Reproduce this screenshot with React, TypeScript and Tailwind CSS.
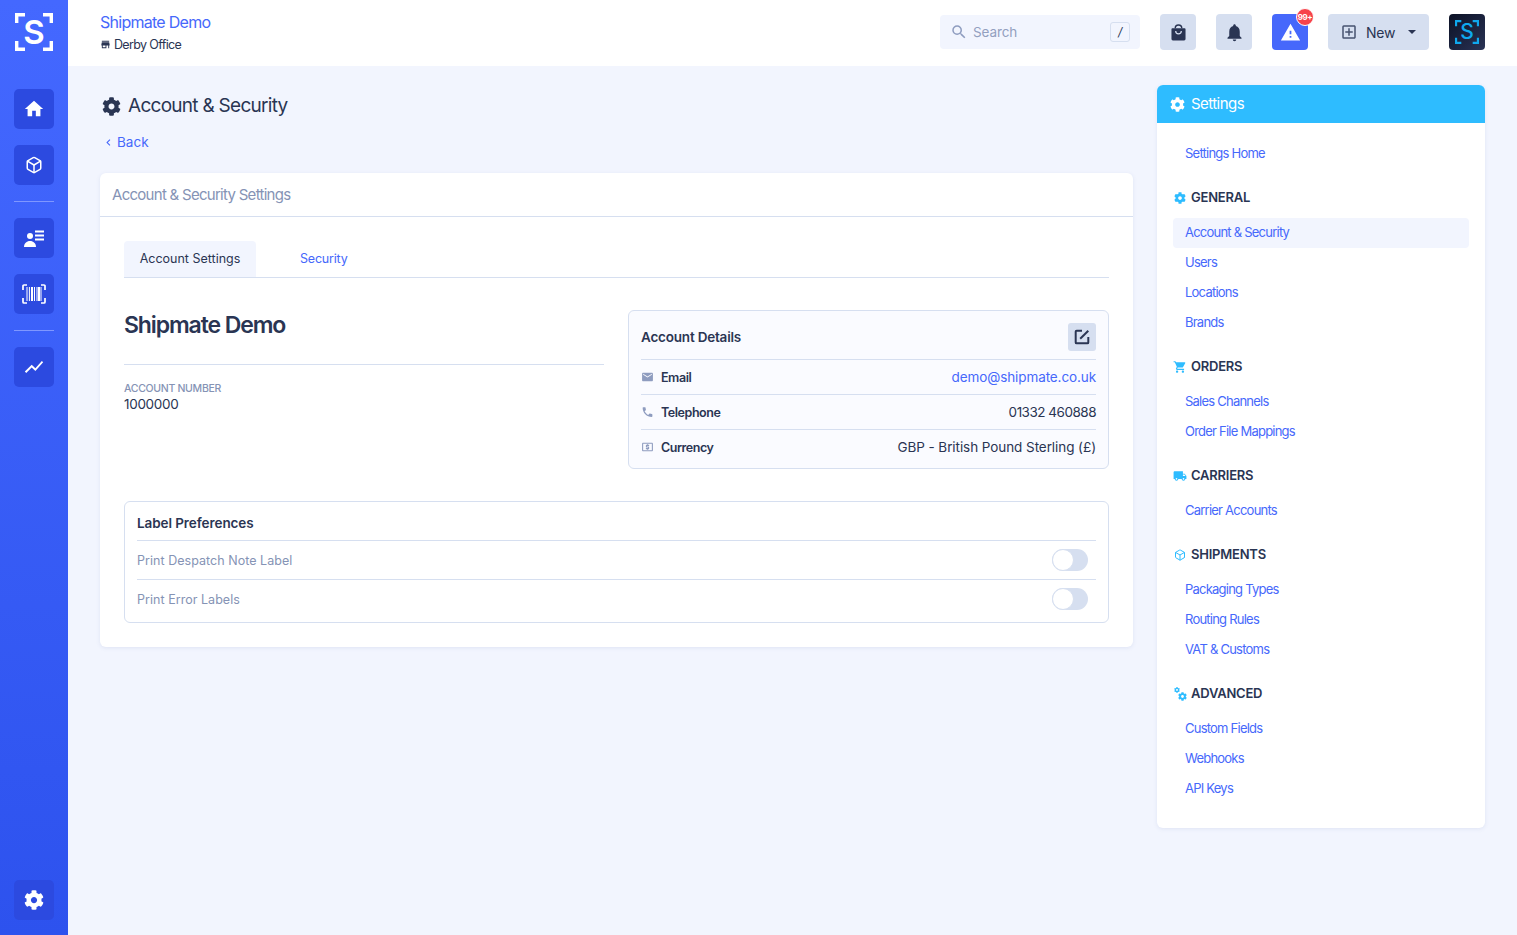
import { FaCog } from 'react-icons/fa';
import { FiBox } from 'react-icons/fi';
import {
  MdEmail,
  MdHome,
  MdKeyboardArrowLeft,
  MdLocalAtm,
  MdLocalPhone,
  MdLocalShipping,
  MdNotifications,
  MdOutlineAddBox,
  MdSearch,
  MdShoppingCart,
  MdShowChart,
  MdStore,
  MdWarning,
} from 'react-icons/md';
import type { ReactNode } from 'react';

function Logo({ big }: { big: boolean }) {
  const color = big ? 'white' : '#0fa8ee';
  return (
    <div className={big ? 'relative flex h-[38px] w-[38px] items-center justify-center' : 'relative flex h-[24px] w-[24px] items-center justify-center'}>
      <svg viewBox="0 0 38 38" className="absolute inset-0 h-full w-full" fill="none" stroke={color} strokeWidth="3.4">
        <path d="M10 1.7H1.7V10M28 1.7H36.3V10M10 36.3H1.7V28M28 36.3H36.3V28" />
      </svg>
      <span className={big ? 'text-[33px] font-semibold leading-[38px] text-white' : 'text-[21px] font-medium leading-[24px] text-[#0fa8ee]'}>S</span>
    </div>
  );
}

function PeopleList() {
  return (
    <svg viewBox="0 0 20 17" className="h-[17px] w-[20px]" fill="white">
      <circle cx="6" cy="6" r="3" />
      <path d="M0 17c0-3.6 2.6-6 6-6s6 2.4 6 6z" />
      <rect x="11" y="0.5" width="9" height="2" />
      <rect x="11" y="4.5" width="9" height="2" />
      <rect x="11" y="8.5" width="9" height="2" />
    </svg>
  );
}

function Barcode() {
  return (
    <svg viewBox="0 0 24 20" className="h-[20px] w-[24px]" fill="none" stroke="white">
      <path d="M1 6V2a1 1 0 0 1 1-1h3M23 6V2a1 1 0 0 0-1-1h-3M1 14v4a1 1 0 0 0 1 1h3M23 14v4a1 1 0 0 1-1 1h-3" strokeWidth="1.7" />
      <path d="M5 3v14M7.4 3v14M12.5 3v14M15 3v14M19 3v14" strokeWidth="1" />
      <path d="M10 3v14M17 3v14" strokeWidth="2" />
    </svg>
  );
}

function EditIcon() {
  return (
    <svg viewBox="0 0 20 20" className="h-[18px] w-[18px]" fill="none" stroke="#2a3553" strokeWidth="2.2">
      <path d="M10 3H4a1 1 0 0 0-1 1v12a1 1 0 0 0 1 1h12a1 1 0 0 0 1-1v-6" />
      <path d="M8 12L17 3" />
    </svg>
  );
}

function AdvancedIcon() {
  return (
    <span className="relative block h-[14px] w-[13px] shrink-0">
      <FaCog className="absolute left-0 top-0 text-[6px] text-[#2ebcff]" />
      <FaCog className="absolute bottom-0 right-0 text-[9px] text-[#2ebcff]" />
    </span>
  );
}

function RailButton({ children }: { children: ReactNode }) {
  return <div className="flex h-[40px] w-[40px] items-center justify-center rounded-[5px] bg-[#2c4ae0] text-white">{children}</div>;
}

function HeaderButton({ children, className }: { children: ReactNode; className: string }) {
  return <div className={`relative flex h-[36px] w-[36px] items-center justify-center rounded-[4px] ${className}`}>{children}</div>;
}

const navSections = [
  { title: 'GENERAL', icon: <FaCog className="text-[12px] text-[#2ebcff]" />, items: ['Account & Security', 'Users', 'Locations', 'Brands'] },
  { title: 'ORDERS', icon: <MdShoppingCart className="text-[14px] text-[#2ebcff]" />, items: ['Sales Channels', 'Order File Mappings'] },
  { title: 'CARRIERS', icon: <MdLocalShipping className="text-[14px] text-[#2ebcff]" />, items: ['Carrier Accounts'] },
  { title: 'SHIPMENTS', icon: <FiBox className="text-[12px] text-[#2ebcff]" />, items: ['Packaging Types', 'Routing Rules', 'VAT & Customs'] },
  { title: 'ADVANCED', icon: <AdvancedIcon />, items: ['Custom Fields', 'Webhooks', 'API Keys'] },
];

function SettingsNav() {
  return (
    <aside className="h-[743px] w-[328px] shrink-0 overflow-hidden rounded-[6px] bg-white shadow-[0_1px_4px_rgba(90,110,170,0.12)]">
      <div className="flex h-[38px] items-center gap-[6px] bg-[#2ebcff] px-[13px] text-[15px] tracking-[-0.55px] text-white">
        <FaCog className="text-[15px]" />
        Settings
      </div>
      <div className="px-[16px] pt-[16px] text-[13px] tracking-[-0.77px] text-[#4668fb]">
        <div className="flex h-[30px] items-center pl-[12px]">Settings Home</div>
        {navSections.map((s) => (
          <div key={s.title}>
            <div className="mb-[10px] mt-[19px] flex h-[20px] items-center gap-[4px] text-[13px] font-semibold tracking-[-0.22px] text-[#2a3553]">
              <span className="flex w-[14px] justify-center">{s.icon}</span>
              {s.title}
            </div>
            {s.items.map((item) => (
              <div key={item} className={`flex h-[30px] items-center pl-[12px] ${item === 'Account & Security' ? 'rounded-[4px] bg-[#f2f5fe]' : ''}`}>
                {item}
              </div>
            ))}
          </div>
        ))}
      </div>
    </aside>
  );
}

function DetailRow({ icon, label, children }: { icon: ReactNode; label: string; children: ReactNode }) {
  return (
    <div className="flex h-[35px] items-center justify-between border-t border-[#d6dff0] text-[13.5px]">
      <div className="flex items-center gap-[7px] text-[12.5px] font-semibold tracking-[-0.45px] text-[#2a3553]">
        <span className="flex w-[13px] justify-center text-[14px] text-[#8e9cbf]">{icon}</span>
        <span className="pt-[2px]">{label}</span>
      </div>
      {children}
    </div>
  );
}

function Toggle() {
  return (
    <div className="mr-[8px] h-[22px] w-[36px] rounded-full bg-[#d6dff0]">
      <div className="h-[22px] w-[22px] rounded-full border border-[#d6dff0] bg-white" />
    </div>
  );
}

function PrefRow({ label }: { label: string }) {
  return (
    <div className="flex h-[39px] items-center justify-between border-t border-[#d6dff0] text-[12.5px] tracking-[0.04px] text-[#8593b5]">
      <span className="pt-[2px]">{label}</span>
      <Toggle />
    </div>
  );
}

export default function App() {
  return (
    <div className="flex min-h-[935px] bg-[#f2f5fe] font-['Inter',sans-serif] text-[#2a3553]">
      {/* Left rail */}
      <nav className="flex w-[68px] shrink-0 flex-col items-center bg-gradient-to-b from-[#4468ff] to-[#2d52ee] pb-[15px] pt-[13px]">
        <Logo big />
        <div className="mt-[38px] flex flex-col gap-[16px]">
          <RailButton><MdHome className="text-[22px]" /></RailButton>
          <RailButton><FiBox className="text-[18px]" /></RailButton>
        </div>
        <div className="my-[16px] h-px w-[40px] bg-[#7f97ff]" />
        <div className="flex flex-col gap-[16px]">
          <RailButton><PeopleList /></RailButton>
          <RailButton><Barcode /></RailButton>
        </div>
        <div className="my-[16px] h-px w-[40px] bg-[#7f97ff]" />
        <RailButton><MdShowChart className="text-[22px]" /></RailButton>
        <div className="mt-auto">
          <RailButton><FaCog className="text-[20px]" /></RailButton>
        </div>
      </nav>

      <div className="min-w-0 flex-1">
        {/* Top bar */}
        <header className="flex h-[66px] items-center bg-white pb-[2px] pl-[32px] pr-[32px]">
          <div>
            <div className="text-[16px] leading-[20px] tracking-[-0.73px] text-[#4668fb]">Shipmate Demo</div>
            <div className="mt-[5px] flex items-center gap-[3px] text-[12.5px] leading-[16px] tracking-[-0.65px]">
              <MdStore className="text-[11px]" />
              Derby Office
            </div>
          </div>
          <div className="ml-auto flex items-center gap-[20px]">
            <div className="flex h-[34px] w-[200px] items-center rounded-[4px] bg-[#f2f5fe] pl-[10px] pr-[10px] text-[13.5px] tracking-[-0.1px] text-[#93a0bf]">
              <MdSearch className="mr-[5px] text-[18px] text-[#8e9cbf]" />
              Search
              <span className="ml-auto flex h-[20px] w-[20px] items-center justify-center rounded-[3px] border border-[#d6dff0] text-[12px] italic text-[#2a3553]">/</span>
            </div>
            <HeaderButton className="bg-[#d6dff0]">
              <svg viewBox="0 0 16 18" className="h-[18px] w-[15px]" fill="#2a3553">
                <path d="M1.5 5h13a1 1 0 0 1 1 1v10.5a1.5 1.5 0 0 1-1.5 1.5H2a1.5 1.5 0 0 1-1.5-1.5V6a1 1 0 0 1 1-1z" />
                <path d="M4.5 5a3.5 3.5 0 0 1 7 0" fill="none" stroke="#2a3553" strokeWidth="1.5" />
                <path d="M5 8a3 3 0 0 0 6 0" fill="none" stroke="#d6dff0" strokeWidth="1.3" />
              </svg>
            </HeaderButton>
            <HeaderButton className="bg-[#d6dff0]"><MdNotifications className="text-[21px] text-[#2a3553]" /></HeaderButton>
            <HeaderButton className="bg-[#4668fb]">
              <MdWarning className="text-[21px] text-white" />
              <span className="absolute -right-[6px] -top-[6px] flex h-[18px] w-[18px] items-center justify-center rounded-full border border-white bg-[#f7434b] text-[8px] font-bold tracking-[-0.4px] text-white">99+</span>
            </HeaderButton>
            <div className="flex h-[36px] w-[101px] items-center rounded-[4px] bg-[#d6dff0] pl-[12px] text-[14px] tracking-[-0.2px]">
              <MdOutlineAddBox className="mr-[8px] text-[18px] text-[#47536f]" />
              New
              <span className="ml-[13px] h-0 w-0 border-x-[4px] border-t-[4px] border-x-transparent border-t-[#2a3553]" />
            </div>
            <div className="flex h-[36px] w-[36px] items-center justify-center rounded-[4px] bg-gradient-to-br from-[#0c1226] to-[#2a3355]">
              <Logo big={false} />
            </div>
          </div>
        </header>

        <main className="flex items-start gap-[24px] px-[32px] pt-[19px]">
          <section className="min-w-0 flex-1">
            <h1 className="ml-[2px] mt-[9px] flex h-[24px] items-center gap-[7px] text-[19px] font-normal tracking-[-0.72px]">
              <FaCog className="text-[19px]" />
              Account &amp; Security
            </h1>
            <div className="ml-[2px] mt-[14px] flex h-[20px] items-center gap-[2px] text-[13.5px] text-[#4668fb]">
              <MdKeyboardArrowLeft className="text-[13px]" />
              Back
            </div>

            <div className="mt-[21px] h-[474px] rounded-[6px] bg-white shadow-[0_1px_4px_rgba(90,110,170,0.12)]">
              <div className="flex h-[44px] items-center border-b border-[#d6dff0] px-[12px] pt-[2px] text-[15px] tracking-[-0.72px] text-[#8593b5]">
                Account &amp; Security Settings
              </div>
              <div className="px-[24px] pt-[24px]">
                <div className="flex h-[37px] border-b border-[#d6dff0] text-[12.5px]">
                  <div className="flex w-[132px] items-center justify-center rounded-t-[4px] bg-[#f2f5fe]">Account Settings</div>
                  <div className="ml-[44px] flex items-center tracking-[-0.2px] text-[#4668fb]">Security</div>
                </div>

                <div className="mt-[32px] flex items-start gap-[24px]">
                  <div className="w-[480px] shrink-0">
                    <div className="flex h-[55px] items-start border-b border-[#d6dff0] text-[23px] font-semibold leading-[30px] tracking-[-1.1px]">
                      Shipmate Demo
                    </div>
                    <div className="mt-[17px] text-[10.5px] font-medium leading-[13px] tracking-[-0.3px] text-[#8593b5]">ACCOUNT NUMBER</div>
                    <div className="text-[13.5px] leading-[18px] tracking-[-0.3px]">1000000</div>
                  </div>
                  <div className="min-w-0 flex-1 rounded-[6px] border border-[#d6dff0] bg-[#fafbff] px-[12px] pb-[4px]">
                    <div className="flex h-[48px] items-start justify-between pt-[12px] text-[13.5px] font-semibold tracking-[-0.2px]">
                      <span className="mt-[4px]">Account Details</span>
                      <div className="flex h-[28px] w-[28px] items-center justify-center rounded-[3px] bg-[#d6dff0]">
                        <EditIcon />
                      </div>
                    </div>
                    <DetailRow icon={<MdEmail />} label="Email">
                      <span className="tracking-[-0.1px] text-[#4668fb]">demo@shipmate.co.uk</span>
                    </DetailRow>
                    <DetailRow icon={<MdLocalPhone />} label="Telephone">
                      <span className="tracking-[-0.5px]">01332 460888</span>
                    </DetailRow>
                    <DetailRow icon={<MdLocalAtm />} label="Currency">
                      <span className="tracking-[-0.07px]">GBP - British Pound Sterling (£)</span>
                    </DetailRow>
                  </div>
                </div>

                <div className="mt-[32px] rounded-[6px] border border-[#d6dff0] px-[12px]">
                  <div className="flex h-[38px] items-center pt-[4px] text-[13.5px] font-semibold tracking-[-0.08px]">Label Preferences</div>
                  <PrefRow label="Print Despatch Note Label" />
                  <PrefRow label="Print Error Labels" />
                  <div className="h-[4px]" />
                </div>
              </div>
            </div>
          </section>

          <SettingsNav />
        </main>
      </div>
    </div>
  );
}
